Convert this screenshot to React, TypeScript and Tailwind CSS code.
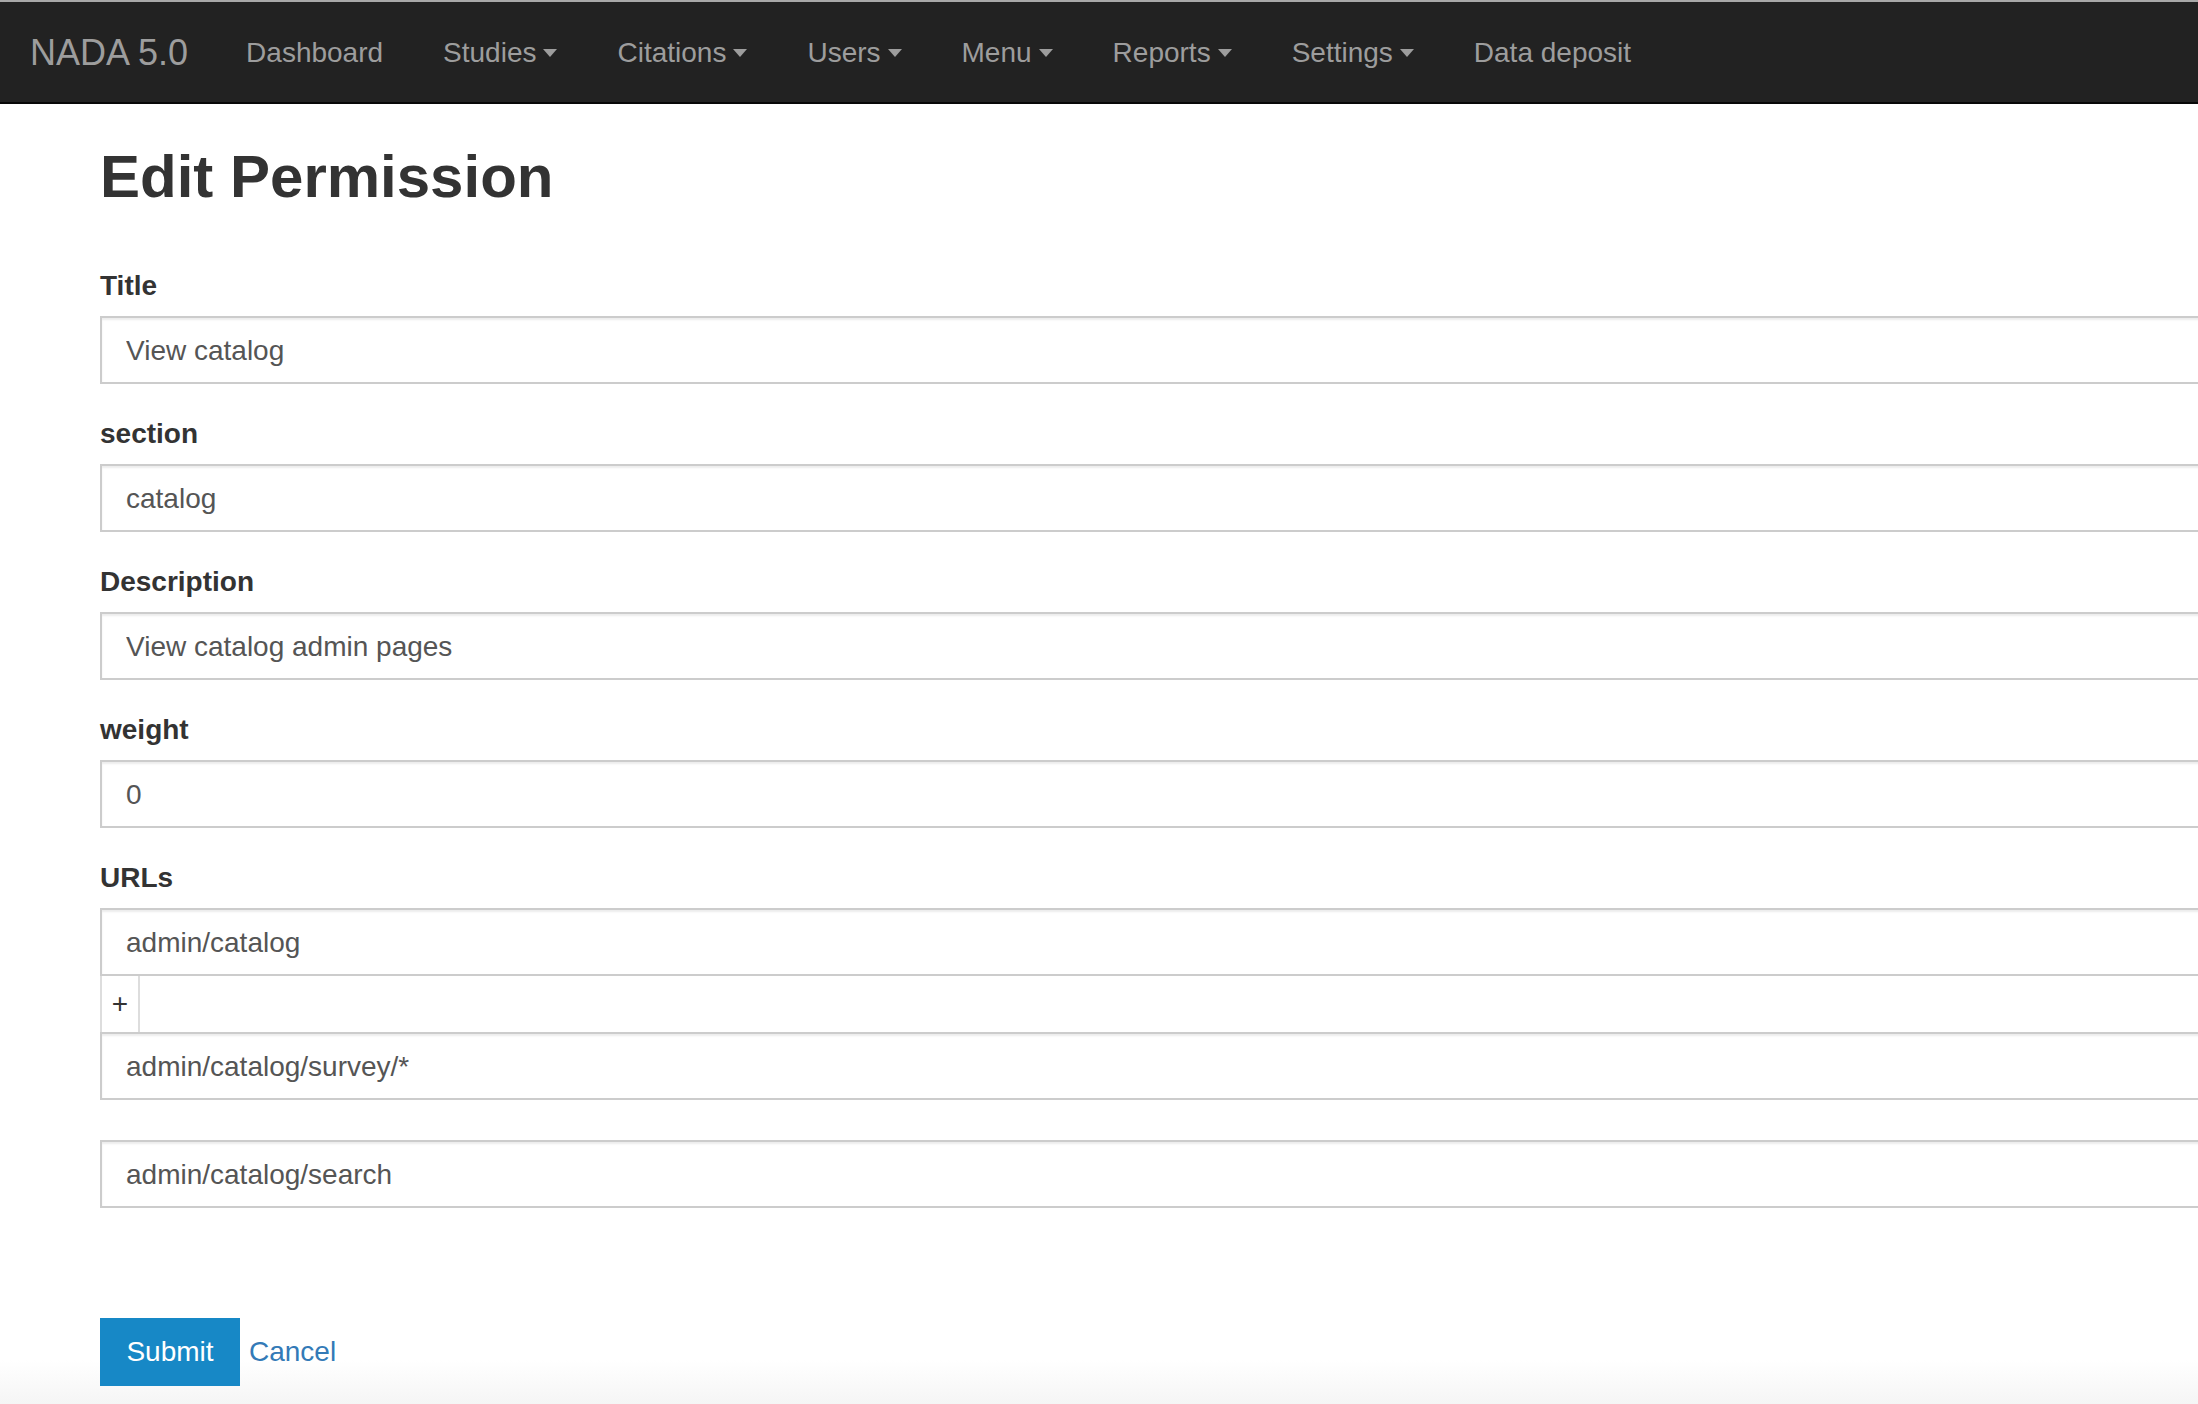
import React from 'react';

const navLinks = [
  { label: 'Dashboard', caret: false },
  { label: 'Studies', caret: true },
  { label: 'Citations', caret: true },
  { label: 'Users', caret: true },
  { label: 'Menu', caret: true },
  { label: 'Reports', caret: true },
  { label: 'Settings', caret: true },
  { label: 'Data deposit', caret: false },
];

const fields = [
  { label: 'Title', value: 'View catalog' },
  { label: 'section', value: 'catalog' },
  { label: 'Description', value: 'View catalog admin pages' },
  { label: 'weight', value: '0' },
];

const inputCls =
  'block h-[68px] w-[2200px] border-2 border-[#ccc] bg-white px-[24px] pt-[2px] text-[28px] text-[#555] shadow-[inset_0_2px_2px_rgba(0,0,0,0.075)] outline-none';

function Caret() {
  return (
    <span className="ml-[7px] inline-block h-0 w-0 border-x-[7px] border-t-[8px] border-x-transparent border-t-[#9d9d9d] align-middle" />
  );
}

export default function App() {
  return (
    <div
      className="h-[1404px] w-full overflow-hidden bg-[linear-gradient(to_bottom,#ffffff_1360px,#f5f5f5_1404px)]"
      style={{ fontFamily: '"Liberation Sans", Arial, sans-serif' }}
    >
      {/* navbar */}
      <nav className="flex h-[104px] items-center border-t-2 border-b-2 border-t-[#a8a8a8] border-b-[#080808] bg-[#222] pt-[2px]">
        <span className="pl-[30px] pr-[28px] text-[36px] text-[#9d9d9d]">NADA 5.0</span>
        <ul className="flex">
          {navLinks.map((l) => (
            <li key={l.label} className="flex items-center px-[30px] text-[28px] text-[#9d9d9d]">
              {l.label}
              {l.caret && <Caret />}
            </li>
          ))}
        </ul>
      </nav>

      <div className="pl-[100px]">
        <h1 className="mt-[40px] mb-[56px] text-[60px] font-bold leading-[1.1] text-[#333]">Edit Permission</h1>

        <form onSubmit={(e) => e.preventDefault()}>
          {fields.map((f) => (
            <div key={f.label} className="mb-[30px]">
              <label className="mb-[10px] block text-[28px] font-bold leading-[40px] text-[#333]">{f.label}</label>
              <input className={inputCls} defaultValue={f.value} />
            </div>
          ))}

          <div>
            <label className="mb-[10px] block text-[28px] font-bold leading-[40px] text-[#333]">URLs</label>
            <input className={inputCls} defaultValue="admin/catalog" />
            <button
              type="button"
              className="flex h-[56px] w-[40px] items-center justify-center border-x-2 border-[#ddd] bg-white text-[28px] leading-none text-[#333]"
            >
              +
            </button>
            <input className={inputCls} defaultValue="admin/catalog/survey/*" />
            <input className={inputCls + ' mt-[40px]'} defaultValue="admin/catalog/search" />
          </div>

          <div className="mt-[110px] flex items-baseline">
            <button type="submit" className="h-[68px] w-[140px] bg-[#1788c6] text-[28px] text-white">
              Submit
            </button>
            <a href="#" className="ml-[9px] text-[28px] text-[#337ab7]">
              Cancel
            </a>
          </div>
        </form>
      </div>
    </div>
  );
}
